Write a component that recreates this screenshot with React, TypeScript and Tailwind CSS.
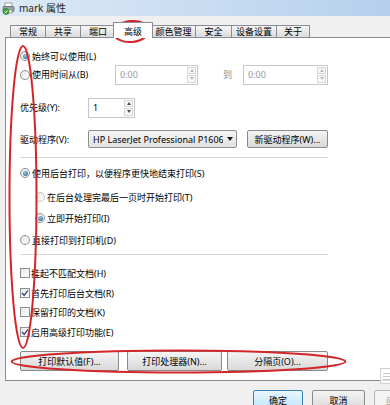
import React from 'react';

const font = "font-['Noto_Sans','Noto_Sans_CJK_SC',sans-serif]";

function PrinterIcon() {
  return (
    <svg width="13" height="13" viewBox="0 0 13 13">
      <rect x="3" y="1" width="7" height="4" fill="#fff" stroke="#8a8a8a" strokeWidth="0.8" />
      <rect x="1" y="4.5" width="11" height="5" rx="1" fill="#9aa3ab" stroke="#5f666d" strokeWidth="0.8" />
      <rect x="3" y="8" width="7" height="3" fill="#fff" stroke="#8a8a8a" strokeWidth="0.8" />
      <circle cx="4" cy="9.5" r="3" fill="#3fa535" stroke="#2a7a22" strokeWidth="0.6" />
      <path d="M2.6 9.5 L3.7 10.6 L5.5 8.5" stroke="#fff" strokeWidth="1" fill="none" />
    </svg>
  );
}

function Radio({ checked, faint }: { checked?: boolean; faint?: boolean }) {
  return (
    <span
      className={`w-[10px] h-[10px] rounded-full border flex items-center justify-center shrink-0 bg-gradient-to-br from-[#e6e6e6] to-[#ffffff] ${
        faint ? 'border-[#c4c4c4]' : 'border-[#8e8f8f]'
      }`}
    >
      {checked && <span className="w-[5px] h-[5px] rounded-full bg-[radial-gradient(circle_at_40%_35%,#8fd0ee,#1f4f73)]" />}
    </span>
  );
}

function Check({ checked }: { checked?: boolean }) {
  return (
    <span className="w-[10px] h-[10px] border border-[#8e8f8f] bg-gradient-to-br from-[#e8e8e8] to-white flex items-center justify-center shrink-0">
      {checked && (
        <svg width="8" height="8" viewBox="0 0 8 8">
          <path d="M1 4 L3.2 6.3 L7 1.3" stroke="#3b4d86" strokeWidth="1.4" fill="none" />
        </svg>
      )}
    </span>
  );
}

function Spin({ value, width, disabled }: { value: string; width: string; disabled?: boolean }) {
  const arrow = disabled ? '#b9b9b9' : '#4d4d4d';
  return (
    <div className={`${width} h-[20px] shrink-0 border border-[#c4c8ce] bg-white flex`}>
      <span className={`flex-1 pl-[4px] flex items-center ${disabled ? 'text-[#9a9a9a]' : 'text-black'}`}>{value}</span>
      <div className="w-[9px] flex flex-col m-[1px] gap-[1px]">
        <span className="flex-1 border border-[#d6d6d6] bg-[#f7f7f7] flex items-center justify-center">
          <svg width="4" height="3" viewBox="0 0 4 3"><path d="M0 3 L2 0 L4 3Z" fill={arrow} /></svg>
        </span>
        <span className="flex-1 border border-[#d6d6d6] bg-[#f7f7f7] flex items-center justify-center">
          <svg width="4" height="3" viewBox="0 0 4 3"><path d="M0 0 L2 3 L4 0Z" fill={arrow} /></svg>
        </span>
      </div>
    </div>
  );
}

function Btn({ label, width, primary }: { label: string; width: string; primary?: boolean }) {
  return (
    <div
      className={`${width} h-full shrink-0 rounded-[2px] border flex items-center justify-center ${
        primary
          ? 'border-[#3c7fb1] bg-gradient-to-b from-[#eaf6fd] to-[#bee6fd]'
          : 'border-[#8a8a8a] bg-gradient-to-b from-[#f4f4f4] to-[#d9d9d9]'
      }`}
    >
      {label}
    </div>
  );
}

const tabs = [
  { label: '常规', w: 'w-[35px]' },
  { label: '共享', w: 'w-[35px]' },
  { label: '端口', w: 'w-[35px]' },
  { label: '高级', w: 'w-[40px]', active: true },
  { label: '颜色管理', w: 'w-[44px]' },
  { label: '安全', w: 'w-[36px]' },
  { label: '设备设置', w: 'w-[45px]' },
  { label: '关于', w: 'w-[34px]' },
];

export default function App() {
  return (
    <div className={`relative w-[390px] h-[405px] overflow-hidden bg-[#f0f0f0] text-[9px] leading-none text-black ${font}`}>
      {/* title bar */}
      <div className="h-[16px] flex items-center gap-[4px] pl-[2px] bg-gradient-to-r from-[#dde9f6] via-[#c9ddf2] to-[#b5d0ec]">
        <PrinterIcon />
        <span className="text-[10px] text-[#1e1e1e]">mark 属性</span>
      </div>

      <div className="pl-[5px]">
        {/* tabs */}
        <div className="relative z-10 mt-[6px] -mb-px ml-[5px] h-[16px] flex items-end">
          {tabs.map((t) =>
            t.active ? (
              <div
                key={t.label}
                className={`${t.w} -mx-[2px] h-[16px] z-10 bg-white border border-b-0 border-[#898c95] flex items-center justify-center pt-[1px]`}
              >
                {t.label}
              </div>
            ) : (
              <div
                key={t.label}
                className={`${t.w} h-[12px] mb-px bg-gradient-to-b from-[#f5f5f5] to-[#dcdcdc] border border-b-0 border-r-0 last:border-r border-[#898c95] flex items-center justify-center`}
              >
                {t.label}
              </div>
            ),
          )}
        </div>

        {/* panel */}
        <div className="w-[420px] h-[344px] bg-white border border-r-0 border-[#898c95] pl-[14px] pt-[10px] flex flex-col">
          <div className="h-[16px] flex items-center gap-[2px]">
            <Radio checked />
            <span>始终可以使用(L)</span>
          </div>
          <div className="h-[21px] flex items-center">
            <div className="w-[95px] flex items-center gap-[2px]">
              <Radio />
              <span>使用时间从(B)</span>
            </div>
            <Spin value="0:00" width="w-[83px]" disabled />
            <span className="w-[45px] pl-[25px] text-[#8a8a8a]">到</span>
            <Spin value="0:00" width="w-[85px]" disabled />
          </div>
          <div className="mt-[12px] h-[21px] flex items-center">
            <span className="w-[68px]">优先级(Y):</span>
            <Spin value="1" width="w-[47px]" />
          </div>
          <div className="mt-[12px] h-[18px] flex items-center">
            <span className="w-[68px]">驱动程序(V):</span>
            <div className="w-[149px] h-full border border-[#8e8f8f] rounded-[2px] bg-gradient-to-b from-[#f5f5f5] to-[#e2e2e2] flex items-center pl-[4px] pr-[3px]">
              <span className="flex-1 overflow-hidden whitespace-nowrap">HP LaserJet Professional P1606dn</span>
              <svg width="6" height="4" viewBox="0 0 6 4" className="ml-[4px] shrink-0">
                <path d="M0 0 L6 0 L3 4Z" fill="#1a1a1a" />
              </svg>
            </div>
            <div className="ml-[10px] h-full">
              <Btn label="新驱动程序(W)..." width="w-[81px]" />
            </div>
          </div>
          <div className="mt-[9px] h-px w-[308px] bg-[#d5d5d5]" />
          <div className="mt-[7px] h-[16px] flex items-center gap-[2px]">
            <Radio checked />
            <span>使用后台打印，以便程序更快地结束打印(S)</span>
          </div>
          <div className="mt-[8px] h-[16px] pl-[15px] flex items-center gap-[2px]">
            <Radio faint />
            <span>在后台处理完最后一页时开始打印(T)</span>
          </div>
          <div className="mt-[5px] h-[16px] pl-[15px] flex items-center gap-[2px]">
            <Radio checked />
            <span>立即开始打印(I)</span>
          </div>
          <div className="mt-[6px] h-[16px] flex items-center gap-[2px]">
            <Radio />
            <span>直接打印到打印机(D)</span>
          </div>
          <div className="mt-[6px] h-px w-[308px] bg-[#d5d5d5]" />
          <div className="mt-[10px] h-[16px] flex items-center gap-[1px]">
            <Check />
            <span>挂起不匹配文档(H)</span>
          </div>
          <div className="mt-[4px] h-[16px] flex items-center gap-[1px]">
            <Check checked />
            <span>首先打印后台文档(R)</span>
          </div>
          <div className="mt-[3px] h-[16px] flex items-center gap-[1px]">
            <Check />
            <span>保留打印的文档(K)</span>
          </div>
          <div className="mt-[4px] h-[16px] flex items-center gap-[1px]">
            <Check checked />
            <span>启用高级打印功能(E)</span>
          </div>
          <div className="mt-[11px] h-[20px] flex">
            <Btn label="打印默认值(F)..." width="w-[99px]" />
            <div className="ml-[8px] h-full">
              <Btn label="打印处理器(N)..." width="w-[95px]" />
            </div>
            <div className="ml-[5px] h-full">
              <Btn label="分隔页(O)..." width="w-[101px]" />
            </div>
          </div>
        </div>
      </div>

      {/* dialog buttons */}
      <div className="w-[440px] mt-[9px] pl-[253px] h-[20px] flex gap-[9px]">
        <Btn label="确定" width="w-[50px]" primary />
        <Btn label="取消" width="w-[53px]" />
        <div className="w-[53px] shrink-0 h-full rounded-[2px] border border-[#b8b8b8] bg-[#f4f4f4] flex items-center justify-center text-[#9a9a9a]">应用(A)</div>
      </div>

      {/* watermark */}
      <div className="absolute left-[380px] top-[368px] w-[14px] h-[16px] border border-[#d0d0d0] bg-white/70 flex flex-col justify-center gap-[2px] px-[2px]">
        <span className="h-px bg-[#c8c8c8]" />
        <span className="h-px bg-[#c8c8c8]" />
        <span className="h-px bg-[#c8c8c8]" />
      </div>

      {/* red annotation marks */}
      <svg className="absolute inset-0 pointer-events-none" width="390" height="405" viewBox="0 0 390 405">
        <ellipse cx="131.5" cy="31.5" rx="17.5" ry="10.5" transform="rotate(-6 131.5 31.5)" fill="none" stroke="#d3262b" strokeWidth="2" />
        <ellipse cx="23" cy="197" rx="13.5" ry="151" fill="none" stroke="#d3262b" strokeWidth="2" />
        <ellipse cx="178.5" cy="361.5" rx="167" ry="11" fill="none" stroke="#d3262b" strokeWidth="2" />
      </svg>
    </div>
  );
}
